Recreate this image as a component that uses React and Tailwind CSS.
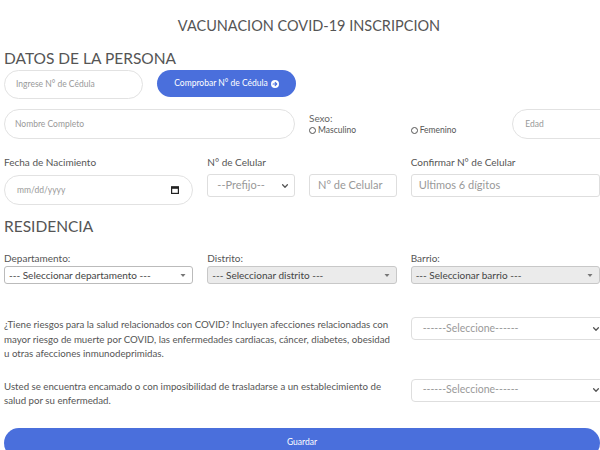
import React from "react";

function Chevron({ className = "" }) {
  return (
    <svg width="8" height="8" viewBox="0 0 10 10" className={className}>
      <path d="M2 3.5 L5 6.5 L8 3.5" fill="none" stroke="#555" strokeWidth="1.6" strokeLinecap="round" strokeLinejoin="round" />
    </svg>
  );
}

function Tri() {
  return (
    <svg width="6" height="5" viewBox="0 0 6 5">
      <path d="M0.5 1 L5.5 1 L3 4 Z" fill="#777" />
    </svg>
  );
}

function Radio({ label }) {
  return (
    <div className="flex items-center gap-[2px] text-[8.5px] leading-[10px] text-[#555] font-['Liberation_Sans_Narrow',Lato,sans-serif]">
      <span className="inline-block w-[7px] h-[7px] rounded-full border border-[#555]"></span>
      <span>{label}</span>
    </div>
  );
}

function SelectBox({ text, disabled }) {
  return (
    <div
      className={
        "h-[18px] rounded-[3px] border flex items-center justify-between pl-[4px] pr-[6px] text-[10px] text-[#444] " +
        (disabled ? "bg-[#ebebeb] border-[#c8c8c8]" : "bg-white border-[#bbb]")
      }
    >
      <span>{text}</span>
      <Tri />
    </div>
  );
}

function Seleccione() {
  return (
    <div className="h-[23px] rounded-[4px] border border-[#dedede] flex items-center justify-between pl-[11px] pr-[4px] text-[10.5px] text-[#9a9a9a] w-[194px]">
      <span>------Seleccione------</span>
      <Chevron />
    </div>
  );
}

export default function App() {
  return (
    <div className="w-[600px] h-[450px] overflow-hidden bg-white pl-1 font-[Lato,sans-serif] text-[#555]">
      <h1 className="pt-[17px] pl-[14px] text-center text-[14.5px] leading-[18px] text-[#555]">
        VACUNACION COVID-19 INSCRIPCION
      </h1>
      <h2 className="mt-[14px] text-[15.5px] leading-[18px] text-[#555]">DATOS DE LA PERSONA</h2>

      <div className="mt-[3px] flex gap-[14px] items-start">
        <div className="w-[139px] h-[29px] rounded-full border border-[#e2e2e2] flex items-center pl-[11px] text-[8.5px] text-[#999] font-['Liberation_Sans_Narrow',Lato,sans-serif]">
          Ingrese N° de Cédula
        </div>
        <div className="w-[139px] h-[27px] rounded-full bg-[#4a6fdc] flex items-center justify-center gap-[3px] text-[8.5px] text-white font-['Liberation_Sans_Narrow',Lato,sans-serif]">
          <span>Comprobar N° de Cédula</span>
          <svg width="8" height="8" viewBox="0 0 10 10">
            <circle cx="5" cy="5" r="5" fill="white" />
            <path d="M2.6 5 H7 M5.2 3 L7.2 5 L5.2 7" fill="none" stroke="#4a6fdc" strokeWidth="1.4" strokeLinecap="round" strokeLinejoin="round" />
          </svg>
        </div>
      </div>

      <div className="grid grid-cols-6 gap-x-[14px] mt-[10px]">
        <div className="col-span-3 h-[30px] rounded-full border border-[#e2e2e2] flex items-center pl-[10px] text-[8.5px] text-[#999] font-['Liberation_Sans_Narrow',Lato,sans-serif]">
          Nombre Completo
        </div>
        <div className="col-span-2 grid grid-cols-2 gap-x-[14px] pt-[2px]">
          <div>
            <div className="text-[10px] leading-[14px] text-[#666]">Sexo:</div>
            <Radio label="Masculino" />
          </div>
          <div className="pt-[14px]">
            <Radio label="Femenino" />
          </div>
        </div>
        <div className="col-span-1">
          <div className="w-[110px] h-[30px] rounded-full border border-[#e2e2e2] flex items-center pl-[12px] text-[8.5px] text-[#999] font-['Liberation_Sans_Narrow',Lato,sans-serif]">
            Edad
          </div>
        </div>
      </div>

      <div className="grid grid-cols-6 gap-x-[14px] mt-[17px]">
        <div className="col-span-2">
          <div className="text-[10px] leading-[12px] text-[#555]">Fecha de Nacimiento</div>
          <div className="mt-[7px] h-[30px] rounded-full border border-[#e2e2e2] flex items-center justify-between pl-[12px] pr-[13px] text-[8.5px] text-[#999] font-['Liberation_Sans_Narrow',Lato,sans-serif]">
            <span>mm/dd/yyyy</span>
            <svg width="8" height="8" viewBox="0 0 8 8">
              <rect x="0.6" y="0.8" width="6.8" height="6.6" fill="none" stroke="#222" strokeWidth="1.2" />
              <rect x="0.6" y="0.8" width="6.8" height="2" fill="#222" />
            </svg>
          </div>
        </div>
        <div className="col-span-2">
          <div className="text-[10px] leading-[12px] text-[#555]">N° de Celular</div>
          <div className="mt-[6px] grid grid-cols-2 gap-x-[14px]">
            <div className="h-[23px] rounded-[3px] border border-[#dedede] flex items-center justify-between pl-[9px] pr-[5px] text-[11px] text-[#999]">
              <span>--Prefijo--</span>
              <Chevron />
            </div>
            <div className="h-[23px] rounded-[3px] border border-[#dedede] flex items-center pl-[8px] text-[11px] text-[#999]">
              N° de Celular
            </div>
          </div>
        </div>
        <div className="col-span-2">
          <div className="text-[10px] leading-[12px] text-[#555]">Confirmar N° de Celular</div>
          <div className="mt-[6px] h-[23px] rounded-[3px] border border-[#dedede] flex items-center pl-[7px] text-[11px] text-[#999]">
            Ultimos 6 dígitos
          </div>
        </div>
      </div>

      <h2 className="mt-[12px] text-[15.5px] leading-[18px] text-[#555]">RESIDENCIA</h2>

      <div className="grid grid-cols-6 gap-x-[14px] mt-[17px]">
        <div className="col-span-2">
          <div className="text-[10px] leading-[12px] text-[#555]">Departamento:</div>
          <div className="mt-[2px]">
            <SelectBox text="--- Seleccionar departamento ---" />
          </div>
        </div>
        <div className="col-span-2">
          <div className="text-[10px] leading-[12px] text-[#555]">Distrito:</div>
          <div className="mt-[2px]">
            <SelectBox text="--- Seleccionar distrito ---" disabled />
          </div>
        </div>
        <div className="col-span-2">
          <div className="text-[10px] leading-[12px] text-[#555]">Barrio:</div>
          <div className="mt-[2px]">
            <SelectBox text="--- Seleccionar barrio ---" disabled />
          </div>
        </div>
      </div>

      <div className="grid grid-cols-6 gap-x-[14px] mt-[33px]">
        <p className="col-span-4 whitespace-nowrap text-[9.7px] leading-[14.5px] text-[#555]">
          ¿Tiene riesgos para la salud relacionados con COVID? Incluyen afecciones relacionadas con
          <br />
          mayor riesgo de muerte por COVID, las enfermedades cardiacas, cáncer, diabetes, obesidad
          <br />
          u otras afecciones inmunodeprimidas.
        </p>
        <div className="col-span-2">
          <Seleccione />
        </div>
      </div>

      <div className="grid grid-cols-6 gap-x-[14px] mt-[18px]">
        <p className="col-span-4 whitespace-nowrap text-[9.7px] leading-[14.5px] text-[#555]">
          Usted se encuentra encamado o con imposibilidad de trasladarse a un establecimiento de
          <br />
          salud por su enfermedad.
        </p>
        <div className="col-span-2">
          <Seleccione />
        </div>
      </div>

      <div className="mt-[20px] h-[30px] rounded-full bg-[#4a6fdc] flex items-center justify-center pb-[1px] text-[8.5px] text-white font-['Liberation_Sans_Narrow',Lato,sans-serif]">
        Guardar
      </div>
    </div>
  );
}
